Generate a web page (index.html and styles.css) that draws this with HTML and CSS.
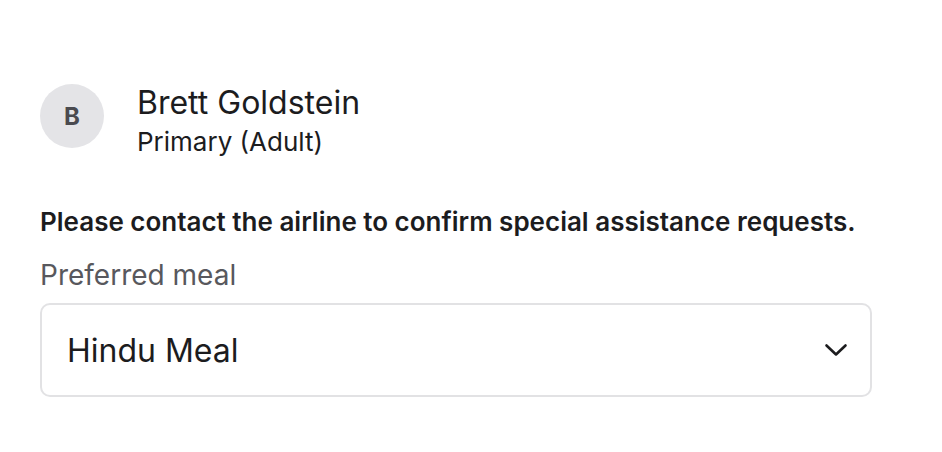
FILE: index.html
```html
<!DOCTYPE html>
<html lang="en">

<head>
    <meta charset="UTF-8" />
    <meta name="viewport" content="width=device-width, initial-scale=1.0" />
    <title>Passenger details</title>
    <link rel="stylesheet" href="styles.css">
</head>

<body>
    <div class="passenger">
        <div class="passenger-head">
            <div class="avatar">B</div>
            <div class="passenger-info">
                <p class="passenger-name">Brett Goldstein</p>
                <p class="passenger-type">Primary (Adult)</p>
            </div>
        </div>
        <p class="notice">Please contact the airline to confirm special assistance requests.</p>
        <label class="field-label">Preferred meal</label>
        <div class="select">
            <span class="select-value">Hindu Meal</span>
            <svg class="select-arrow" width="24" height="14" viewBox="0 0 24 14" fill="none">
                <path d="M2.5 2.5l9.5 9 9.5-9" stroke="#1c1c1e" stroke-width="2.6" stroke-linecap="round" stroke-linejoin="round" />
            </svg>
        </div>
    </div>
</body>

</html>
```

FILE: styles.css
```css
* {
    box-sizing: border-box;
}

body {
    margin: 0;
    font-family: Inter, "Noto Sans", sans-serif;
    color: #1c1c1e;
    background: #fff;
}

.passenger {
    width: 832px;
    margin-left: 40px;
    padding-top: 83px;
}

.passenger-head {
    display: flex;
    align-items: flex-start;
    gap: 33px;
}

.avatar {
    margin-top: 1px;
    width: 64px;
    height: 64px;
    border-radius: 50%;
    background: #e4e4e7;
    color: #4a4a4f;
    font-size: 24px;
    font-weight: 700;
    display: flex;
    align-items: center;
    justify-content: center;
}

.passenger-info p {
    margin: 0;
}

.passenger-name {
    font-size: 32px;
    line-height: 40px;
}

.passenger-type {
    font-size: 26px;
    line-height: 38px;
}

.notice {
    margin: 45px 0 0;
    font-size: 26px;
    font-weight: 600;
    line-height: 32px;
}

.field-label {
    display: block;
    margin-top: 20px;
    font-size: 28px;
    line-height: 34px;
    color: #58585d;
}

.select {
    margin-top: 11px;
    height: 94px;
    border: 2px solid #e2e2e4;
    border-radius: 10px;
    padding: 0 22px 0 25px;
    display: flex;
    align-items: center;
    justify-content: space-between;
}

.select-value {
    font-size: 32px;
}
```
